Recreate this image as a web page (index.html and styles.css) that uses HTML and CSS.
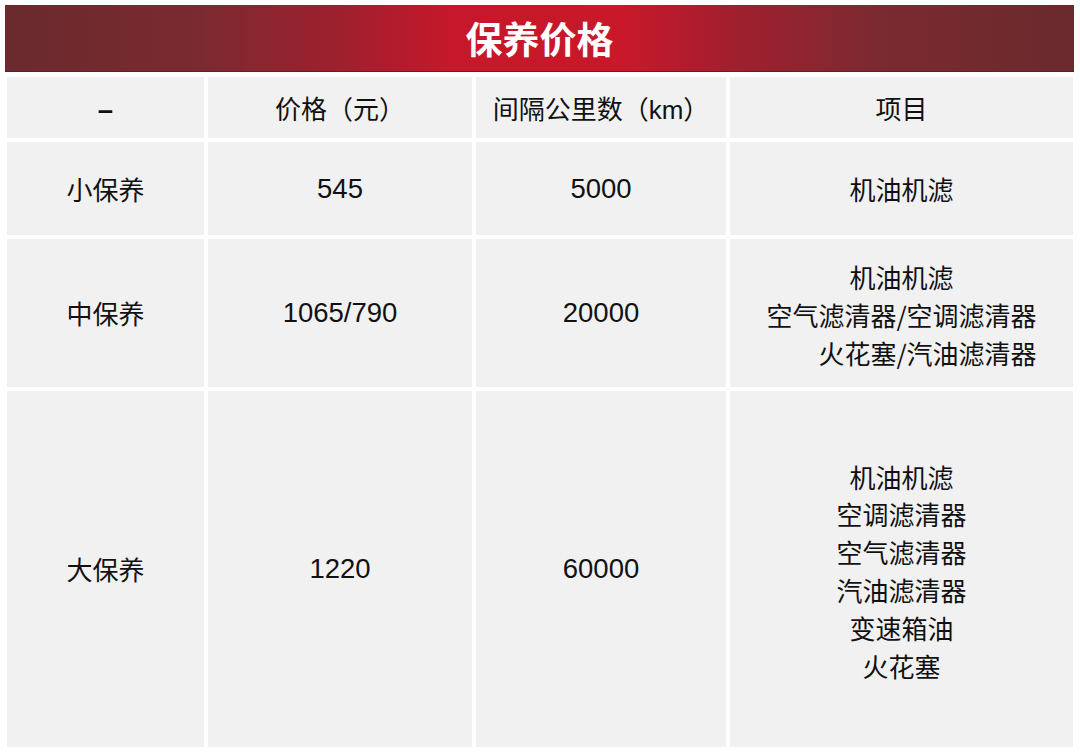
FILE: index.html
```html
<!DOCTYPE html>
<html lang="zh-CN">
<head>
<meta charset="utf-8">
<title>保养价格</title>
<link rel="stylesheet" href="styles.css">
</head>
<body>
<div class="page">
  <div class="banner">保养价格</div>
  <div class="table">
    <div class="cell head"><span class="num dash">–</span></div>
    <div class="cell head">价格（元）</div>
    <div class="cell head">间隔公里数（<span class="num km">km</span>）</div>
    <div class="cell head">项目</div>

    <div class="cell r1">小保养</div>
    <div class="cell r1"><span class="num">545</span></div>
    <div class="cell r1"><span class="num">5000</span></div>
    <div class="cell r1">机油机滤</div>

    <div class="cell r2">中保养</div>
    <div class="cell r2"><span class="num">1065/790</span></div>
    <div class="cell r2"><span class="num">20000</span></div>
    <div class="cell r2 list">
      <div>机油机滤</div>
      <div>空气滤清器/空调滤清器</div>
      <div class="shift">火花塞/汽油滤清器</div>
    </div>

    <div class="cell r3">大保养</div>
    <div class="cell r3"><span class="num">1220</span></div>
    <div class="cell r3"><span class="num">60000</span></div>
    <div class="cell r3 list">
      <div>机油机滤</div>
      <div>空调滤清器</div>
      <div>空气滤清器</div>
      <div>汽油滤清器</div>
      <div>变速箱油</div>
      <div>火花塞</div>
    </div>
  </div>
</div>
</body>
</html>
```
FILE: styles.css
```css
html, body {
  margin: 0;
  padding: 0;
  background: #ffffff;
}
body {
  font-family: "Noto Sans CJK SC", "Noto Sans", sans-serif;
  color: #111111;
}
.page {
  width: 1080px;
  height: 755px;
  padding-top: 5px;
  box-sizing: border-box;
}
.banner {
  margin-left: 5px;
  width: 1069px;
  height: 67px;
  box-sizing: border-box;
  border-bottom: 1px solid #6a1c24;
  background: linear-gradient(to right, #6a2a2e 0%, #7a2a30 18%, #a11f2e 32%, #c6182a 42%, #c8182a 58%, #a11f2e 68%, #7a2a30 82%, #6a2a2e 100%);
  color: #ffffff;
  font-size: 37px;
  font-weight: 700;
  line-height: 66px;
  text-align: center;
}
.table {
  margin-top: 5px;
  margin-left: 7px;
  width: 1066px;
  display: grid;
  grid-template-columns: 197px 264px 250px 343px;
  grid-template-rows: 61px 93px 148px 356px;
  gap: 4px;
}
.cell {
  background: #f1f1f1;
  display: flex;
  flex-direction: column;
  align-items: center;
  justify-content: center;
  font-size: 26px;
  text-align: center;
  line-height: 1;
}
.head {
  display: block;
  line-height: 61px;
  padding-top: 0;
}
.num {
  font-family: "Liberation Sans", Arial, sans-serif;
  font-size: 27.5px;
}
.dash {
  font-weight: 700;
}
.km {
  font-size: 26px;
}
.list {
  line-height: 37.8px;
  padding-top: 4px;
  box-sizing: border-box;
}
.shift {
  padding-left: 52px;
}
```
